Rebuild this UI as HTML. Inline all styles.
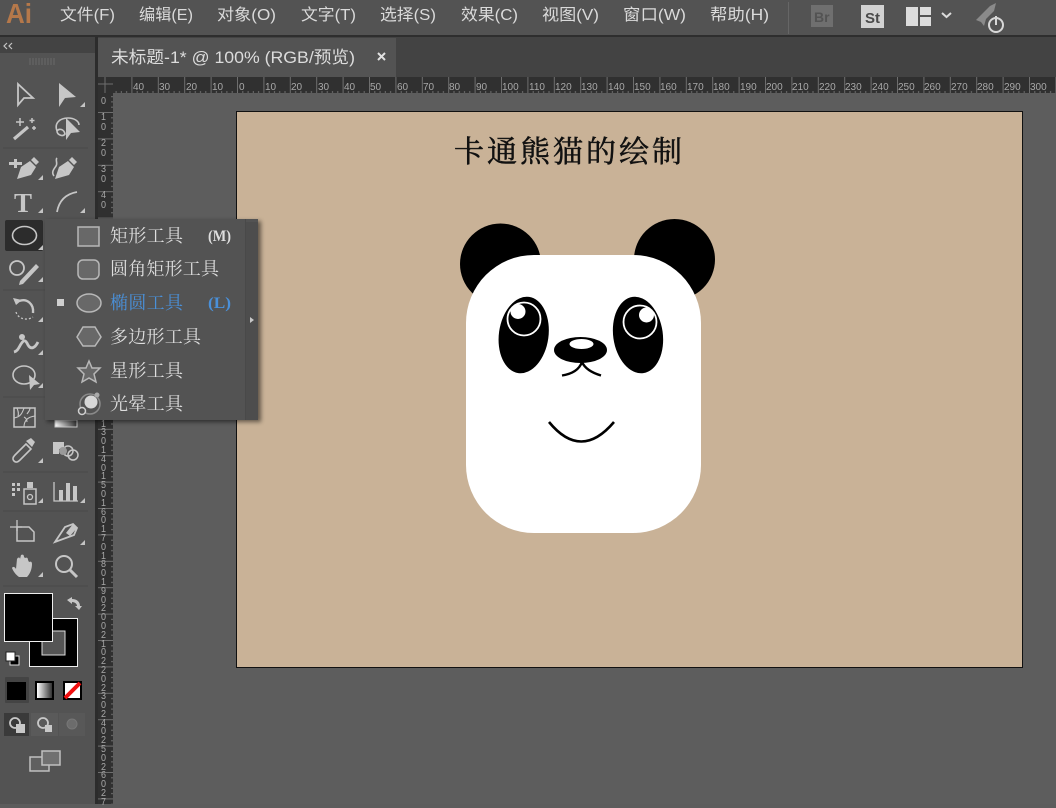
<!DOCTYPE html>
<html lang="zh"><head><meta charset="utf-8"><title>未标题-1</title>
<style>
html,body{margin:0;padding:0;background:#5c5c5c}
body{width:1056px;height:804px;overflow:hidden;position:relative;font-family:"Liberation Sans","Noto Sans CJK SC",sans-serif}
svg{position:absolute;left:0;top:0;display:block}
svg text{font-family:"Liberation Sans","Noto Sans CJK SC",sans-serif}
.v{position:absolute;left:101px;width:7px;word-break:break-all;font-size:10px;line-height:9.6px;color:#a8a8a8;transform:scaleX(.9);transform-origin:0 0}
</style></head><body>
<svg width="1056" height="804" viewBox="0 0 1056 804">
<defs>
<pattern id="hr" x="131.4" y="77" width="26.4" height="16" patternUnits="userSpaceOnUse"><rect width="26.4" height="16" fill="#303030"/><rect x="0" y="0" width="1" height="16" fill="#6e6e6e"/><g fill="#6e6e6e"><rect x="5.3" y="14" width="1" height="2"/><rect x="10.6" y="14" width="1" height="2"/><rect x="15.8" y="14" width="1" height="2"/><rect x="21.1" y="14" width="1" height="2"/></g></pattern>
<pattern id="vr" x="98" y="112" width="15" height="26.4" patternUnits="userSpaceOnUse"><rect width="15" height="26.4" fill="#303030"/><rect y="0" width="15" height="1" fill="#6e6e6e"/><g fill="#6e6e6e"><rect x="13" y="5.3" width="2" height="1"/><rect x="13" y="10.6" width="2" height="1"/><rect x="13" y="15.8" width="2" height="1"/><rect x="13" y="21.1" width="2" height="1"/></g></pattern>
<path id="t" d="M0 0l-5 5h5z" fill="#c4c4c4"/>
<linearGradient id="g1"><stop offset="0" stop-color="#fff"/><stop offset="1" stop-color="#333"/></linearGradient>
</defs>
<rect width="1056" height="804" fill="#5d5d5d"/>
<!-- menu bar -->
<rect width="1056" height="36" fill="#535353"/>
<rect y="35" width="1056" height="2" fill="#2e2e2e"/>
<text x="6" y="23" font-size="28" font-weight="bold" fill="#b5784a" textLength="26" lengthAdjust="spacingAndGlyphs">Ai</text>
<g font-size="16" fill="#dadada">
<text x="60" y="20" textLength="55" lengthAdjust="spacingAndGlyphs">文件(F)</text>
<text x="139" y="20" textLength="54" lengthAdjust="spacingAndGlyphs">编辑(E)</text>
<text x="217" y="20" textLength="59" lengthAdjust="spacingAndGlyphs">对象(O)</text>
<text x="301" y="20" textLength="55" lengthAdjust="spacingAndGlyphs">文字(T)</text>
<text x="380" y="20" textLength="56" lengthAdjust="spacingAndGlyphs">选择(S)</text>
<text x="461" y="20" textLength="57" lengthAdjust="spacingAndGlyphs">效果(C)</text>
<text x="542" y="20" textLength="57" lengthAdjust="spacingAndGlyphs">视图(V)</text>
<text x="623" y="20" textLength="63" lengthAdjust="spacingAndGlyphs">窗口(W)</text>
<text x="710" y="20" textLength="59" lengthAdjust="spacingAndGlyphs">帮助(H)</text>
</g>
<rect x="788" y="2" width="1" height="32" fill="#666"/>
<rect x="811" y="5" width="22" height="22" fill="#6f6f6f"/>
<text x="814" y="22" font-size="14" font-weight="bold" fill="#535353">Br</text>
<rect x="861" y="5" width="23" height="23" fill="#d2d2d2"/>
<text x="865" y="23" font-size="15" font-weight="bold" fill="#4a4a4a">St</text>
<path d="M906 7h12v19h-12zM920 7h11v8h-11zM920 17h11v9h-11z" fill="#dcdcdc"/>
<path d="M942 13l4.500 4 4.500-4" fill="none" stroke="#dcdcdc" stroke-width="2"/>
<path d="M976 20L990 6l6-3-2 8-8 8-2 7-3-4z" fill="#8a8a8a"/>
<circle cx="996" cy="25" r="7" fill="none" stroke="#d8d8d8" stroke-width="2"/><path d="M996 16v9" stroke="#d8d8d8" stroke-width="2"/>
<!-- tab bar -->
<rect x="98" y="37" width="958" height="40" fill="#434343"/>
<rect x="98" y="38" width="298" height="39" fill="#535353"/>
<text x="111" y="63" font-size="17" fill="#dcdcdc" textLength="244" lengthAdjust="spacingAndGlyphs">未标题-1* @ 100% (RGB/预览)</text>
<path d="M378 53l7 7M385 53l-7 7" stroke="#e2e2e2" stroke-width="2"/>
<!-- rulers -->
<rect x="98" y="77" width="958" height="16" fill="url(#hr)"/>
<rect x="98" y="93" width="15" height="711" fill="url(#vr)"/>
<rect x="98" y="77" width="15" height="16" fill="#303030"/>
<path d="M98 84h15M105 77v16" stroke="#6e6e6e"/>
<g font-size="10" fill="#a8a8a8">
<text x="133" y="90">40</text><text x="159" y="90">30</text><text x="186" y="90">20</text><text x="212" y="90">10</text><text x="239" y="90">0</text><text x="265" y="90">10</text><text x="291" y="90">20</text><text x="318" y="90">30</text><text x="344" y="90">40</text><text x="370" y="90">50</text><text x="397" y="90">60</text><text x="423" y="90">70</text><text x="449" y="90">80</text><text x="476" y="90">90</text><text x="502" y="90">100</text><text x="529" y="90">110</text><text x="555" y="90">120</text><text x="581" y="90">130</text><text x="608" y="90">140</text><text x="634" y="90">150</text><text x="660" y="90">160</text><text x="687" y="90">170</text><text x="713" y="90">180</text><text x="740" y="90">190</text><text x="766" y="90">200</text><text x="792" y="90">210</text><text x="819" y="90">220</text><text x="845" y="90">230</text><text x="872" y="90">240</text><text x="898" y="90">250</text><text x="924" y="90">260</text><text x="951" y="90">270</text><text x="977" y="90">280</text><text x="1004" y="90">290</text><text x="1030" y="90">300</text>
</g>
<!-- artboard -->
<rect x="236.500" y="111.500" width="786" height="556" fill="#c9b297" stroke="#111"/>
<text x="454" y="162" font-size="30" fill="#111" stroke="#111" stroke-width=".5" textLength="228" style="font-family:'Noto Serif CJK SC',serif">卡通熊猫的绘制</text>
<!-- panda -->
<circle cx="500.500" cy="264" r="40.500" fill="#000"/>
<circle cx="674.500" cy="259.500" r="40.500" fill="#000"/>
<rect x="466" y="255" width="235" height="278" rx="68" ry="68" fill="#fff"/>
<ellipse cx="523.700" cy="335" rx="24.800" ry="38.500" transform="rotate(8 523.700 335)" fill="#000"/>
<ellipse cx="638" cy="335" rx="24.800" ry="38.500" transform="rotate(-8 638 335)" fill="#000"/>
<circle cx="524" cy="319" r="16.500" fill="none" stroke="#fff" stroke-width="1.800"/>
<circle cx="518" cy="311.500" r="7.500" fill="#fff"/>
<circle cx="640" cy="322" r="16.500" fill="none" stroke="#fff" stroke-width="1.800"/>
<circle cx="646.500" cy="315" r="7.500" fill="#fff"/>
<ellipse cx="580.500" cy="350" rx="26.500" ry="13" fill="#000"/>
<ellipse cx="581.500" cy="344" rx="12" ry="5" fill="#fff"/>
<path d="M582 362Q578 373 562 375.500M582 362Q586 371 601 375.500" fill="none" stroke="#000" stroke-width="2.400"/>
<path d="M549 422Q581 461 614 422" fill="none" stroke="#000" stroke-width="2.600"/>
<!-- toolbar -->
<rect y="37" width="95" height="767" fill="#535353"/>
<rect x="95" y="37" width="3" height="767" fill="#2c2c2c"/>
<rect y="37" width="95" height="16" fill="#434343"/>
<path d="M7 43l-3 3 3 3M12 43l-3 3 3 3" fill="none" stroke="#c4c4c4" stroke-width="1.200"/>
<path d="M30 58v7M33 58v7M36 58v7M39 58v7M42 58v7M45 58v7M48 58v7M51 58v7M54 58v7" stroke="#6a6a6a"/>
<g stroke="#4a4a4a"><path d="M3 148h85M3 290h42M3 397h85M3 472h85M3 511h85M3 586h85"/></g>
<rect x="5" y="220" width="38" height="31" rx="2" fill="#2c2c2c"/>
<g fill="none" stroke="#c6c6c6" stroke-width="2">
<path d="M18 84L33 98H24L18 105Z" stroke-width="1.800"/>
<path d="M14 139L28 127" stroke-width="3.200"/>
<path d="M20 118v8M16 122h8M32 118v5M29.500 120.500h5M34 126v4M32 128h4" stroke-width="1.500"/>
<path d="M57 131c-3-8 3-13 11-13 6 0 11 3 11 7M57 131c0 4 6 6 8 3-1-5-6-6-8-3z" stroke-width="1.600"/>
<ellipse cx="24.500" cy="235.500" rx="12" ry="9" stroke-width="1.600"/>
<path d="M57 212Q60 195 77 192" stroke-width="1.800"/>
<path d="M54 176c-3-4 0-7 2-10 2-3-1-6 1-8" stroke-width="1.600"/>
<circle cx="17" cy="268" r="7" stroke-width="1.800"/>
<path d="M33 313c1-9-6-15-14-12" stroke-width="2.400"/>
<path d="M16 312c2 7 11 9 17 5" stroke-width="1.300" stroke-dasharray="2 2"/>
<path d="M14 352c4-1 5-5 7-8s4-6 7 1c3 5 7 3 10-3" stroke-width="2.800"/>
<ellipse cx="24" cy="375" rx="11" ry="9" stroke-width="1.600"/>
<rect x="14" y="408" width="21" height="19" stroke-width="1.500"/>
<path d="M14 418c6-1 8-4 10-10M24 427c0-6 3-10 11-11M24 417c2 1 3 3 3 5M17 408c1 3 2 5 1 8M30 408c0 3-2 4-3 6" stroke-width="1.100"/>
<path d="M14 461c-2-2-1-4 1-6l11-11 5 5-11 11c-2 2-4 3-6 1z" stroke-width="1.600"/>
<circle cx="68" cy="451" r="5" stroke-width="1.500"/><circle cx="73" cy="455" r="5" stroke-width="1.500"/>
<rect x="24" y="489" width="12" height="15" stroke-width="1.500"/><circle cx="30" cy="497" r="2.500" stroke-width="1.300"/>
<path d="M54 482v19h24" stroke-width="1.300"/>
<path d="M10 527h12M17 520v11" stroke-width="1.300"/>
<path d="M17 527h12l5 5v9H17z" stroke-width="1.500"/>
<path d="M55 542L65 527l8-3 4 4-3 7z" stroke-width="1.800"/>
<circle cx="64" cy="564" r="8" stroke-width="2"/><path d="M70 570l7 7" stroke-width="3"/>
</g>
<g fill="#c6c6c6">
<path d="M59 83L76 97L65 98L59 107Z"/>
<path d="M66 118L80 132L71 133L66 140Z"/>
<path d="M14 159v3h-5v3h5v3h3v-3h5v-3h-5v-3z"/>
<path d="M17 179L21 167 30 161 36 167 31 175Z"/><path d="M31 160l3-3 5 5-3 3z"/>
<path d="M55 179L59 167 68 161 74 167 69 175Z"/><path d="M69 160l3-3 5 5-3 3z"/>
<text x="14" y="212" font-size="27" font-weight="bold" style="font-family:'Liberation Serif',serif">T</text>
<path d="M20 281l16-17 3 3-16 17-4 1z"/>
<path d="M13 298l3 7 6-5z"/>
<circle cx="22" cy="337" r="3"/>
<path d="M29 375l11 9-6 1-4 5z"/>
<path d="M53 442h11v7h-5v5h-6z"/><circle cx="63" cy="451" r="4" fill="#9a9a9a"/>
<path d="M26 441l5-3 4 4-3 5z"/>
<path d="M12 483h3v3h-3zM17 483h3v3h-3zM12 488h3v3h-3zM17 488h3v3h-3zM12 493h3v3h-3z"/><rect x="27" y="482" width="6" height="6"/>
<path d="M59 490h4v11h-4zM66 483h4v18h-4zM73 486h4v15h-4z"/>
<path d="M66 533L73 524 77 528 70 536Z"/>
<path d="M19 577c-3-2-6-6-7-9 1-2 3-1 4 1l1-10c1-2 3-2 3 0l1-4c2-1 3 0 3 2l1 1c2-1 3 0 3 2l1 2c2-1 3 0 3 2 0 5-2 10-5 13z"/>
</g>
<rect x="55" y="420" width="22" height="7" fill="url(#g1)" stroke="#c6c6c6"/>
<g><use href="#t" x="85" y="102"/><use href="#t" x="43" y="175"/><use href="#t" x="43" y="208"/><use href="#t" x="85" y="208"/><use href="#t" x="43" y="245"/><use href="#t" x="43" y="277"/><use href="#t" x="43" y="317"/><use href="#t" x="43" y="350"/><use href="#t" x="43" y="383"/><use href="#t" x="43" y="458"/><use href="#t" x="43" y="498"/><use href="#t" x="85" y="498"/><use href="#t" x="85" y="540"/><use href="#t" x="43" y="572"/></g>
<!-- colour controls -->
<rect x="29.500" y="618.500" width="48" height="48" fill="#000" stroke="#eee"/>
<rect x="42" y="631" width="23" height="24" fill="#555" stroke="#ddd"/>
<rect x="4.500" y="593.500" width="48" height="48" fill="#000" stroke="#eee"/>
<path d="M67 600l5-3v2c5 0 8 3 8 7h2l-3 4-4-4h2c0-2-2-4-5-4v2z" fill="#c6c6c6"/>
<rect x="10" y="656" width="9" height="9" fill="#000" stroke="#ddd"/>
<rect x="6" y="652" width="9" height="9" fill="#fff" stroke="#222"/>
<rect x="5" y="677" width="24" height="26" rx="1" fill="#444"/>
<rect x="7" y="682" width="19" height="18" fill="#000"/>
<rect x="35" y="681" width="19" height="19" fill="#000"/><rect x="37" y="683" width="15" height="15" fill="url(#g1)"/>
<rect x="63" y="681" width="19" height="19" fill="#000"/><rect x="65" y="683" width="15" height="15" fill="#fff"/>
<path d="M65 698L80 683" stroke="#f01010" stroke-width="4"/>
<rect x="4" y="713" width="25" height="23" fill="#3a3a3a"/>
<rect x="31" y="713" width="27" height="23" fill="#5a5a5a"/>
<rect x="59" y="713" width="26" height="23" fill="#585858"/>
<g fill="none" stroke="#c8c8c8" stroke-width="1.800"><circle cx="15" cy="723" r="5"/><circle cx="43" cy="723" r="5"/></g>
<rect x="16" y="724" width="9" height="9" fill="#c8c8c8"/><rect x="45" y="725" width="7" height="7" fill="#c8c8c8"/>
<circle cx="72" cy="724" r="5" fill="#6c6c6c" stroke="#777"/>
<rect x="30" y="757" width="19" height="14" fill="#606060" stroke="#c0c0c0" stroke-width="1.500"/>
<rect x="42" y="751" width="18" height="14" fill="#707070" stroke="#c0c0c0" stroke-width="1.500"/>
</svg>
<div class="v" style="top:97px">0</div>
<div class="v" style="top:113px">10</div>
<div class="v" style="top:139px">20</div>
<div class="v" style="top:165px">30</div>
<div class="v" style="top:191px">40</div>
<div class="v" style="top:420.600px;line-height:8.800px">13014015016017018019020021022023024025026027</div>
<svg width="1056" height="804" viewBox="0 0 1056 804">
<defs><filter id="sh" x="-10%" y="-10%" width="120%" height="120%"><feGaussianBlur stdDeviation="2"/></filter></defs>
<rect x="47" y="221" width="214" height="201" fill="#000" opacity=".5" filter="url(#sh)"/>
<rect x="45" y="219" width="213" height="201" fill="#535353"/>
<rect x="246" y="222" width="12" height="198" fill="#4d4d4d"/>
<rect x="245" y="219" width="1" height="201" fill="#494949"/>
<path d="M250 317l4 3-4 3z" fill="#c8c8c8"/>
<g stroke="#b8b8b8" stroke-width="1.500" fill="#686868">
<rect x="78" y="227" width="21" height="19"/>
<rect x="78" y="260" width="21" height="19" rx="5"/>
<ellipse cx="89" cy="303" rx="12" ry="9"/>
<path d="M83 327H95L101 337L95 346H83L77 337Z"/>
<path d="M89 361L92 368 100 368 94 374 96 382 89 378 82 382 84 374 78 368 86 368Z"/>
</g>
<circle cx="90" cy="404" r="10" fill="none" stroke="#8a8a8a" stroke-width="1.500"/>
<circle cx="91" cy="402" r="6.500" fill="#d8d8d8"/>
<circle cx="82" cy="411" r="3.500" fill="#535353" stroke="#d0d0d0" stroke-width="1.500"/>
<circle cx="97" cy="395" r="2.500" fill="#aaa"/>
<rect x="57" y="299" width="7" height="7" fill="#cfcfcf"/>
<g font-size="18" fill="#dedede">
<text x="110" y="242" style="font-family:'Noto Serif CJK SC',serif" textLength="73">矩形工具</text>
<text x="110" y="275" style="font-family:'Noto Serif CJK SC',serif" textLength="109">圆角矩形工具</text>
<text x="110" y="309" fill="#4a90d9" style="font-family:'Noto Serif CJK SC',serif" textLength="73">椭圆工具</text>
<text x="110" y="343" style="font-family:'Noto Serif CJK SC',serif" textLength="91">多边形工具</text>
<text x="110" y="377" style="font-family:'Noto Serif CJK SC',serif" textLength="73">星形工具</text>
<text x="110" y="410" style="font-family:'Noto Serif CJK SC',serif" textLength="73">光晕工具</text>
</g>
<text x="208" y="241" font-size="16" font-weight="bold" fill="#dedede" textLength="23" lengthAdjust="spacingAndGlyphs" style="font-family:'Liberation Serif',serif">(M)</text>
<text x="208" y="308" font-size="16" font-weight="bold" fill="#4a90d9" textLength="23" lengthAdjust="spacingAndGlyphs" style="font-family:'Liberation Serif',serif">(L)</text>
</svg>
</body></html>
